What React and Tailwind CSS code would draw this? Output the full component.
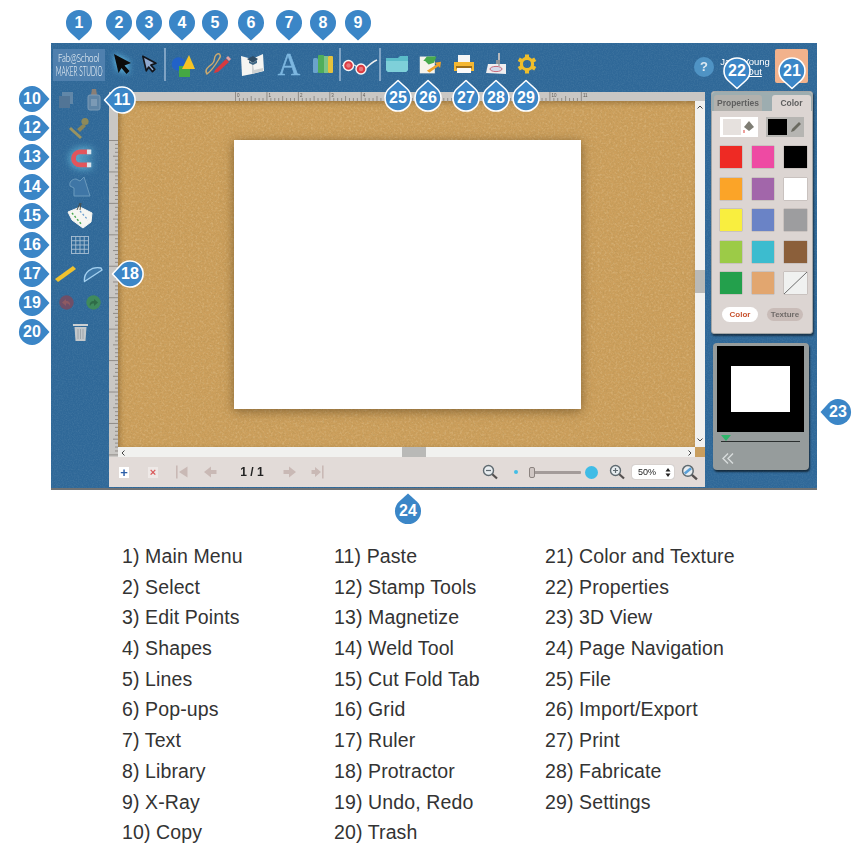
import React from "react";

function Pin({ n, dir = "down", ring = false, pos }) {
  const rot = { down: "", up: "rotate-180", left: "rotate-90", right: "-rotate-90" }[dir];
  return (
    <div className={`absolute w-9 h-9 ${pos}`}>
      <svg viewBox="0 0 36 36" width="36" height="36" className={`absolute inset-0 overflow-visible ${rot}`}>
        <path d="M18 35.5 L9.2 27.5 A13 13 0 1 1 26.8 27.5 Z" fill="#3b86c7" stroke={ring ? "#ffffff" : "none"} strokeWidth="1.6" strokeLinejoin="round" />
      </svg>
      <div className="absolute inset-0 flex items-center justify-center text-white font-bold text-[16px] leading-none">{n}</div>
    </div>
  );
}

const Slot = ({ w, children }) => <div className={`${w} flex items-center justify-center shrink-0 h-full`}>{children}</div>;
const Divider = () => <div className="w-[2px] h-[33px] shrink-0 bg-[#7fa3c4]" />;

const SelectIcon = () => (
  <svg width="26" height="26" viewBox="0 0 26 26" className="drop-shadow-[0_0_3px_#6fd0f5]">
    <path d="M5 3 L22 12 L15.5 14.5 L20.5 20 L17.5 23 L12.5 17 L9.5 22Z" fill="#0b0b0b" />
  </svg>
);
const EditIcon = () => (
  <svg width="22" height="22" viewBox="0 0 26 26">
    <path d="M5 3 L22 12 L15.5 14.5 L20.5 20 L17.5 23 L12.5 17 L9.5 22Z" fill="#8fa9cf" stroke="#12151c" strokeWidth="2.2" strokeLinejoin="round" />
  </svg>
);
const ShapesIcon = () => (
  <svg width="26" height="26" viewBox="0 0 26 26">
    <circle cx="9.5" cy="13" r="6.8" fill="#2262c8" />
    <path d="M10 26 V15 H21 V26Z" fill="#45a843" />
    <path d="M20 4 L26 18 H13Z" fill="#f6c324" />
  </svg>
);
const LinesIcon = () => (
  <svg width="28" height="26" viewBox="0 0 28 26">
    <path d="M4 23 C1 19 5 16 9 13 C13 10 10 7 13 4 C16 1 19 4 16 8 C13 13 8 20 4 23Z" fill="none" stroke="#cdaa6e" strokeWidth="1.4" />
    <path d="M12 19 L23 8 L26 11 L15 21 L11 22Z" fill="#d63a3f" />
    <path d="M23 7 L25 5 L28 8 L26 10Z" fill="#e8a0a0" />
  </svg>
);
const BookIcon = () => (
  <svg width="26" height="26" viewBox="0 0 26 26">
    <path d="M2 5 L13 8 L24 3 L25 20 L13 23 L3 25Z" fill="#f5f5f2" />
    <path d="M13 8 L13 23 L24 20 L24 17 L15 19Z" fill="#cfd2d2" />
    <path d="M8 8 L14 5 L19 8 L14 12Z" fill="#2e4d66" />
    <path d="M10 10 L14 12 L18 9 L18 12 L14 14 L10 12Z" fill="#3f6785" />
  </svg>
);
const LibraryIcon = () => (
  <svg width="22" height="20" viewBox="0 0 22 20">
    <rect x="1" y="4" width="5" height="15" rx="1.5" fill="#6aa3cc" />
    <rect x="6" y="1" width="6" height="18" rx="1" fill="#4fae5b" />
    <rect x="12" y="2" width="4" height="17" fill="#7dc487" />
    <rect x="16" y="2" width="5" height="17" rx="1" fill="#e5c23c" />
  </svg>
);
const GlassesIcon = () => (
  <svg width="36" height="22" viewBox="0 0 36 22">
    <path d="M0.5 13 L5 9 M23 16 C26 13 30 9 35 7" stroke="#eeeeee" strokeWidth="1.4" fill="none" />
    <path d="M10 12 C12 11 13 12 15 14" stroke="#eeeeee" strokeWidth="1.2" fill="none" />
    <circle cx="6.5" cy="12.5" r="5" fill="#dc3c42" stroke="#f8f8f8" strokeWidth="1.4" />
    <circle cx="19" cy="16" r="5" fill="#dc3c42" stroke="#f8f8f8" strokeWidth="1.4" />
    <circle cx="6.5" cy="12.5" r="2.2" fill="#e9787c" />
    <circle cx="19" cy="16" r="2.2" fill="#e9787c" />
  </svg>
);
const FolderIcon = () => (
  <svg width="24" height="20" viewBox="0 0 24 20">
    <path d="M1 4 H13 L15 2 H23 V16 L21 18 H3 L1 16Z" fill="#5bbcc9" />
    <path d="M1 7 H23 V16 L21 18 H3 L1 16Z" fill="#7ed0d9" />
  </svg>
);
const ImportIcon = () => (
  <svg width="23" height="23" viewBox="0 0 26 26">
    <path d="M2 4 H19 V23 H2Z" fill="#f5f3ec" />
    <path d="M6 9 L10 4 H21 L18 11 L12 13 L8 9Z" fill="#47a94d" />
    <path d="M10 20 L21 13 L19 11 L26 10 L25 17 L23 15 L13 22Z" fill="#eca12d" />
  </svg>
);
const PrintIcon = () => (
  <svg width="22" height="22" viewBox="0 0 22 22">
    <path d="M5 2 H17 V10 H5Z" fill="#f5f5f5" />
    <path d="M1 9 H21 V18 H1Z" fill="#f4b732" />
    <path d="M3 13 H19 V15.5 H3Z" fill="#9c6d18" />
    <path d="M4 15 H18 V20 H4Z" fill="#fafafa" />
  </svg>
);
const FabIcon = () => (
  <svg width="22" height="24" viewBox="0 0 22 24">
    <path d="M3 12 L21 12 L21 22 L1 21Z" fill="#f0eef0" />
    <ellipse cx="11" cy="17" rx="6" ry="2.6" fill="#d5d9ea" stroke="#c66d7f" strokeWidth="1" />
    <path d="M13 1 H15 V14 H13Z" fill="#b5b8bc" />
    <path d="M11 8 H15 V12 H11Z" fill="#8f9499" />
  </svg>
);
const GearIcon = () => (
  <svg width="20" height="20" viewBox="0 0 20 20">
    <circle cx="10" cy="10" r="5.6" fill="none" stroke="#f0be2b" strokeWidth="3.2" />
    {[0, 60, 120, 180, 240, 300].map((a) => (
      <rect key={a} x="8" y="0.5" width="4" height="4" fill="#f0be2b" transform={`rotate(${a} 10 10)`} />
    ))}
  </svg>
);

const Copy = () => (
  <svg width="16" height="18" viewBox="0 0 16 18">
    <rect x="4" y="1" width="11" height="12" fill="#6187a8" />
    <rect x="1" y="5" width="11" height="12" fill="#527596" />
  </svg>
);
const Paste = () => (
  <svg width="14" height="22" viewBox="0 0 14 22">
    <path d="M5 0 H9 L10 6 H4Z" fill="#8a7f76" />
    <rect x="1" y="6" width="12" height="15" rx="2" fill="#5f85a6" stroke="#7d9bb6" />
    <rect x="4" y="10" width="6" height="7" fill="#7c9ab5" />
  </svg>
);
const Stamp = () => (
  <svg width="24" height="24" viewBox="0 0 24 24">
    <circle cx="17" cy="4.5" r="3.6" fill="#8e8a5a" />
    <path d="M15 7 L18 9 L12 15 L9 12Z" fill="#8b8658" />
    <path d="M3 10 L14 20 L12 22 L1 12Z" fill="#9a9360" />
  </svg>
);
const Magnet = () => (
  <svg width="26" height="22" viewBox="0 0 30 24" className="drop-shadow-[0_0_4px_#7fe0f8]">
    <path d="M26 5 H15 A7.5 7.5 0 0 0 15 20 H26" fill="none" stroke="#e2555c" strokeWidth="5.5" />
    <path d="M23 2.2 H28 V7.8 H23Z M23 17.2 H28 V22.8 H23Z" fill="#d9e4ec" />
  </svg>
);
const Weld = () => (
  <svg width="22" height="22" viewBox="0 0 22 22">
    <path d="M7 3 C3 3 0 6 1 10 L5 12 V20 H21 L15 1 L11 5Z" fill="#3f76a6" stroke="#6b9abd" strokeWidth="1" />
  </svg>
);
const CutFold = () => (
  <svg width="27" height="26" viewBox="0 0 27 26">
    <path d="M1 9 L13 4 L25 10 L24 19 L16 25 L5 17Z" fill="#f6f6f2" strokeLinejoin="round" stroke="#f6f6f2" />
    <path d="M5 10 L15 22" stroke="#48a84e" strokeWidth="1.4" strokeDasharray="2 2" />
    <path d="M13 8 L21 17" stroke="#6d9fcf" strokeWidth="1.2" strokeDasharray="2 2" />
    <path d="M10 7 L13 0 M13 7 L14 0" stroke="#4a4a40" strokeWidth="0.9" />
  </svg>
);
const GridIcon = () => (
  <svg width="18" height="18" viewBox="0 0 18 18" stroke="#a9bfd3" strokeWidth="0.9" fill="none">
    <rect x="0.5" y="0.5" width="17" height="17" />
    <path d="M4.75 .5V17.5M9 .5V17.5M13.25 .5V17.5M.5 4.75H17.5M.5 9H17.5M.5 13.25H17.5" />
  </svg>
);
const Ruler = () => (
  <svg width="21" height="17" viewBox="0 0 21 17"><path d="M0 14 L18 1 L21 4 L3 17Z" fill="#f0c22e" /></svg>
);
const Protractor = () => (
  <svg width="20" height="18" viewBox="0 0 20 18">
    <path d="M1.5 16.5 C0.5 8 8 1 18 3 L19 5Z" fill="#3f79a9" stroke="#a3d0f0" strokeWidth="1.4" strokeLinejoin="round" />
  </svg>
);
const Undo = ({ c, d, a }) => (
  <svg width="15" height="15" viewBox="0 0 15 15">
    <circle cx="7.5" cy="7.5" r="7.2" fill={c} />
    <path d={d} fill={a} />
  </svg>
);
const Trash = () => (
  <svg width="15" height="19" viewBox="0 0 15 19">
    <path d="M0 2 H15 V4 H0Z" fill="#ccd0d2" />
    <path d="M1.5 5 H13.5 L12.5 19 H2.5Z" fill="#c3c8cb" />
    <path d="M5 7 V17 M7.5 7 V17 M10 7 V17" stroke="#9aa2a8" strokeWidth="0.9" />
  </svg>
);

const Row = ({ children, between }) => (
  <div className={`h-[29px] flex items-center ${between ? "justify-between px-[6px]" : "justify-center"}`}>{children}</div>
);

const majors = [0, 1, 2, 3, 4, 10, 11];
const ticks = Array.from({ length: 89 }, (_, i) => i);

const TopRuler = () => (
  <svg width="356" height="9" viewBox="0 0 356 9" className="block">
    {ticks.map((i) => {
      const x = 0.5 + i * 3.93;
      const h = i % 8 === 0 ? 9 : i % 4 === 0 ? 5 : 3;
      return <line key={i} x1={x} x2={x} y1={9} y2={9 - h} stroke="#77736e" strokeWidth="0.7" />;
    })}
    {majors.map((i) => (
      <text key={i} x={2 + i * 31.45} y="4.5" fontSize="4.5" fill="#5e5a56" fontFamily="Liberation Sans">{i}</text>
    ))}
  </svg>
);
const LeftRuler = () => (
  <svg width="9" height="317" viewBox="0 0 9 317" className="block">
    {Array.from({ length: 81 }, (_, i) => i).map((i) => {
      const y = 0.5 + i * 3.93;
      const h = i % 8 === 0 ? 9 : i % 4 === 0 ? 5 : 3;
      return <line key={i} x1={9} x2={9 - h} y1={y} y2={y} stroke="#77736e" strokeWidth="0.7" />;
    })}
  </svg>
);

const swatches = [
  "bg-[#ee2a24]", "bg-[#ee4aa3]", "bg-black",
  "bg-[#fba428]", "bg-[#a266aa]", "bg-white",
  "bg-[#f9ee3f]", "bg-[#6a83c6]", "bg-[#9d9d9f]",
  "bg-[#9ccb47]", "bg-[#3cbccf]", "bg-[#8b5f3a]",
  "bg-[#23a04c]", "bg-[#e2a66f]",
];

const Arrow = ({ d, bar }) => (
  <svg width="14" height="14" viewBox="0 0 14 14">
    <path d={d} fill="#c9b9b5" />
    {bar && <path d={bar} fill="#c9b9b5" />}
  </svg>
);

const Mag = ({ inner, size = 16 }) => (
  <svg width={size} height={size} viewBox="0 0 16 16">
    <path d="M9.5 9.5 L15 14.5" stroke="#55504f" strokeWidth="2.2" />
    <circle cx="6.5" cy="6.5" r="5" fill="#e8edf0" stroke="#5f6a70" strokeWidth="1.4" />
    {inner}
  </svg>
);

const col1 = ["1) Main Menu", "2) Select", "3) Edit Points", "4) Shapes", "5) Lines", "6) Pop-ups", "7) Text", "8) Library", "9) X-Ray", "10) Copy"];
const col2 = ["11) Paste", "12) Stamp Tools", "13) Magnetize", "14) Weld Tool", "15) Cut Fold Tab", "16) Grid", "17) Ruler", "18) Protractor", "19) Undo, Redo", "20) Trash"];
const col3 = ["21) Color and Texture", "22) Properties", "23) 3D View", "24) Page Navigation", "25) File", "26) Import/Export", "27) Print", "28) Fabricate", "29) Settings"];

const Column = ({ items, w }) => (
  <div className={`${w} shrink-0`}>
    {items.map((t) => (
      <div key={t} className="h-[30.7px] leading-[30.7px] whitespace-nowrap">{t}</div>
    ))}
  </div>
);

export default function App() {
  return (
    <div className="relative w-[866px] h-[856px] overflow-hidden bg-white font-['Liberation_Sans',Arial,sans-serif]">
      <div className="pt-[43px] pl-[51px]">
        <div className="relative w-[766px] h-[447px] bg-[#2f6898] border-b-2 border-[#6f7274] blur-[0.35px]">
          <svg className="absolute inset-0" width="766" height="445">
            <filter id="denim" x="0" y="0" width="100%" height="100%">
              <feTurbulence type="fractalNoise" baseFrequency="0.8" numOctaves="2" seed="3" />
              <feColorMatrix values="0 0 0 0 0.1  0 0 0 0 0.25  0 0 0 0 0.42  1.5 0 0 0 -0.55" />
            </filter>
            <rect width="766" height="445" filter="url(#denim)" opacity="0.45" />
          </svg>
          <div className="relative">
            <div className="h-[42px] flex items-center">
              <div className="ml-[2px] w-[52px] h-[32px] mt-[2px] bg-[#4f80ae] text-white flex flex-col items-center justify-center shrink-0 font-light leading-none whitespace-nowrap overflow-hidden">
                <div className="text-[11px] scale-x-[0.72] font-['Lato',sans-serif]">Fab@School</div>
                <div className="text-[14px] scale-x-[0.46] mt-[1px] font-['Lato',sans-serif]">MAKER STUDIO</div>
              </div>
              <Slot w="w-[34px]"><SelectIcon /></Slot>
              <Slot w="w-[20px]"><EditIcon /></Slot>
              <div className="w-[5px] shrink-0" />
              <Divider />
              <Slot w="w-[31px]"><ShapesIcon /></Slot>
              <Slot w="w-[40px]"><LinesIcon /></Slot>
              <Slot w="w-[30px]"><BookIcon /></Slot>
              <Slot w="w-[42px]"><span className="font-['Liberation_Serif',serif] text-[#7db7e0] text-[31px] leading-none ml-[2px] [-webkit-text-stroke:0.5px_#7db7e0]">A</span></Slot>
              <Slot w="w-[28px]"><LibraryIcon /></Slot>
              <div className="w-[2px] shrink-0" />
              <Divider />
              <Slot w="w-[38px]"><GlassesIcon /></Slot>
              <Divider />
              <Slot w="w-[32px]"><FolderIcon /></Slot>
              <Slot w="w-[32px]"><ImportIcon /></Slot>
              <Slot w="w-[38px]"><PrintIcon /></Slot>
              <Slot w="w-[26px]"><FabIcon /></Slot>
              <Slot w="w-[36px]"><GearIcon /></Slot>
              <div className="flex-1" />
              <div className="w-5 h-5 rounded-full bg-[#4f93c4] text-[#dfeaf2] text-[13px] font-bold flex items-center justify-center mt-[5px] shrink-0">?</div>
              <div className="w-[50px] ml-[6px] mt-[5px] text-white text-[9.5px] leading-[10px] text-center whitespace-nowrap shrink-0">
                <div>Jane Young</div>
                <div className="underline">Log Out</div>
              </div>
              <div className="w-[33px] h-[34px] ml-[5px] mr-[9px] mt-[4px] rounded-[2px] bg-[#f2b28c] shrink-0" />
            </div>

            <div className="flex">
              <div className="w-[58px] shrink-0">
                <Row between><span className="ml-[1px]"><Copy /></span><span className="mr-[2px]"><Paste /></span></Row>
                <Row><Stamp /></Row>
                <Row><Magnet /></Row>
                <Row><Weld /></Row>
                <Row><CutFold /></Row>
                <Row><GridIcon /></Row>
                <Row between><span className="-ml-[2px]"><Ruler /></span><span className="mr-0"><Protractor /></span></Row>
                <Row between>
                  <span className="ml-[2px]"><Undo c="#6e4f68" a="#8e5a62" d="M3 7.5 L7 4 V6 C10 6 12 8 11 11 C10 9 9 8.5 7 8.5 V11Z" /></span>
                  <span className="mr-[2px]"><Undo c="#3f8a5c" a="#2f6b47" d="M12 7.5 L8 4 V6 C5 6 3 8 4 11 C5 9 6 8.5 8 8.5 V11Z" /></span>
                </Row>
                <Row><Trash /></Row>
              </div>

              <div className="w-[596px] shrink-0 mt-[7px] h-[395px] flex flex-col bg-[#e2dbd8]">
                <div className="h-[9px] bg-[#c9c7c4] pl-[126px]"><TopRuler /></div>
                <div className="flex h-[356px]">
                  <div className="w-[9px] h-full bg-[#c9c7c4] pt-[39px] overflow-hidden shrink-0"><LeftRuler /></div>
                  <div className="w-[587px] flex flex-col">
                    <div className="flex h-[346px]">
                      <div className="relative w-[577px] h-full pl-[116px] pt-[39px] bg-[#cc9f5c] overflow-hidden">
                        <svg className="absolute inset-0" width="577" height="346">
                          <filter id="corkDark" x="0" y="0" width="100%" height="100%">
                            <feTurbulence type="fractalNoise" baseFrequency="0.6" numOctaves="3" seed="7" />
                            <feColorMatrix values="0 0 0 0 0.42  0 0 0 0 0.27  0 0 0 0 0.08  1.8 0 0 0 -0.78" />
                          </filter>
                          <filter id="corkLight" x="0" y="0" width="100%" height="100%">
                            <feTurbulence type="fractalNoise" baseFrequency="0.45" numOctaves="2" seed="21" />
                            <feColorMatrix values="0 0 0 0 0.93  0 0 0 0 0.8  0 0 0 0 0.55  2 0 0 0 -0.95" />
                          </filter>
                          <rect width="577" height="346" filter="url(#corkDark)" opacity="0.5" />
                          <rect width="577" height="346" filter="url(#corkLight)" opacity="0.3" />
                        </svg>
                        <div className="absolute inset-0 shadow-[inset_2px_2px_5px_rgba(70,45,10,0.35)]" />
                        <div className="relative w-[347px] h-[269px] bg-white shadow-[0_2px_10px_rgba(60,40,10,0.5)]" />
                      </div>
                      <div className="relative w-[10px] h-full bg-[#f1f1ef]">
                        <div className="mt-[169px] h-[23px] bg-[#b9b9b7]" />
                        <svg className="absolute top-[4px] left-[2px]" width="6" height="4" viewBox="0 0 6 4"><path d="M.5 3.5 L3 1 L5.5 3.5" fill="none" stroke="#444" strokeWidth="1" /></svg>
                        <svg className="absolute bottom-[5px] left-[2px]" width="6" height="4" viewBox="0 0 6 4"><path d="M.5 .5 L3 3 L5.5 .5" fill="none" stroke="#444" strokeWidth="1" /></svg>
                      </div>
                    </div>
                    <div className="flex h-[10px]">
                      <div className="relative w-[577px] h-full bg-[#f1f1ef]">
                        <div className="ml-[284px] w-[24px] h-full bg-[#b9b9b7]" />
                        <svg className="absolute top-[3px] left-[3px]" width="4" height="6" viewBox="0 0 4 6"><path d="M3.5 .5 L1 3 L3.5 5.5" fill="none" stroke="#444" strokeWidth="1" /></svg>
                        <svg className="absolute top-[3px] right-[3px]" width="4" height="6" viewBox="0 0 4 6"><path d="M.5 .5 L3 3 L.5 5.5" fill="none" stroke="#444" strokeWidth="1" /></svg>
                      </div>
                      <div className="w-[10px] h-full bg-[#c99e5e]" />
                    </div>
                  </div>
                </div>

                <div className="h-[30px] flex items-center text-[#222]">
                  <div className="ml-[10px] w-[10px] h-[11px] bg-white flex items-center justify-center text-[#2c5fa8] font-bold text-[13px] leading-none">+</div>
                  <div className="ml-[19px] w-[10px] h-[11px] bg-[#eee9e7] flex items-center justify-center text-[#d9595a] font-bold text-[11px] leading-none">×</div>
                  <div className="ml-[17px]"><Arrow d="M4 7 L12.5 1.5 V12.5Z" bar="M1 0.5 H2.6 V13.5 H1Z" /></div>
                  <div className="ml-[14px]"><Arrow d="M1 7 L8 1.5 V5 H13.5 V9 H8 V12.5Z" /></div>
                  <div className="ml-[20px] w-[30px] text-center text-[12px] font-bold leading-none whitespace-nowrap">1 / 1</div>
                  <div className="ml-[16px]"><Arrow d="M13 7 L6 1.5 V5 H.5 V9 H6 V12.5Z" /></div>
                  <div className="ml-[14px]"><Arrow d="M10 7 L4 2 V5 H.5 V9 H4 V12Z" bar="M11 0.5 H12.6 V13.5 H11Z" /></div>
                  <div className="ml-[157px]"><Mag inner={<path d="M4 6.5 H9" stroke="#5f6a70" strokeWidth="1.2" />} /></div>
                  <div className="ml-[16px] w-[4px] h-[4px] rounded-full bg-[#43bde6]" />
                  <div className="relative ml-[11px] w-[52px] h-[3px] bg-[#a39b99] rounded-[1px]">
                    <div className="absolute left-0 top-[-4px] w-[6px] h-[11px] rounded-[2px] bg-[#cfc6c3] border border-[#8b8380]" />
                  </div>
                  <div className="ml-[4px] w-[13px] h-[13px] rounded-full bg-[#3fbce6]" />
                  <div className="ml-[11px]"><Mag inner={<path d="M4 6.5 H9 M6.5 4 V9" stroke="#5f6a70" strokeWidth="1.2" />} /></div>
                  <div className="ml-[7px] w-[42px] h-[14px] bg-white rounded-[3px] shadow-[0_0_1px_#888] flex items-center justify-between pl-[6px] pr-[3px] text-[9px] leading-none">
                    <span>50%</span>
                    <svg width="6" height="9" viewBox="0 0 6 9"><path d="M3 0 L5.5 3.4 H.5Z M3 9 L.5 5.6 H5.5Z" fill="#222" /></svg>
                  </div>
                  <div className="ml-[7px]"><Mag size={17} inner={<path d="M3.5 9 L9.5 4" stroke="#5aa0d8" strokeWidth="2.4" />} /></div>
                </div>
              </div>

              <div className="w-[112px] shrink-0">
                <div className="ml-[6px] mt-[6px] w-[102px] h-[243px] rounded-[3px] bg-[#dcd5d2] border border-[#a3a6a6] shadow-[1px_2px_2px_rgba(0,0,0,0.5)] flex flex-col">
                  <div className="flex h-[19px] bg-[#9dadb0] rounded-t-[3px] pl-[2px] pt-[3px] text-[8.5px] font-bold leading-[16px]">
                    <div className="w-[48px] text-center bg-[#b2b1ad] rounded-t-[3px] text-[#5f5f5f]">Properties</div>
                    <div className="ml-[10px] w-[39px] text-center bg-[#dcd5d2] rounded-t-[3px] text-[#5f5f5f]">Color</div>
                  </div>
                  <div className="flex pl-[8px] pr-[8px] mt-[6px] justify-between">
                    <div className="w-[38px] h-[20px] bg-white flex items-center pl-[3px]">
                      <div className="w-[18px] h-[16px] bg-[#e6e1de]" />
                      <svg className="ml-[2px]" width="12" height="14" viewBox="0 0 12 14"><path d="M6 1 L11 7 L6 11 L1 7Z" fill="#7e7d74" /><path d="M1 10 V13" stroke="#e2605a" strokeWidth="1.2" /></svg>
                    </div>
                    <div className="w-[38px] h-[20px] bg-[#b6b5b2] flex items-center pl-[2px]">
                      <div className="w-[19px] h-[16px] bg-black" />
                      <svg className="ml-[3px]" width="12" height="12" viewBox="0 0 12 12"><path d="M1 11 L2 8 L9 1 L11 3 L4 10Z" fill="#6a6a60" /></svg>
                    </div>
                  </div>
                  <div className="grid grid-cols-[22px_22px_23px] gap-x-[10px] gap-y-[9.5px] pl-[7px] ml-[1px] mt-[9px]">
                    {swatches.map((c, i) => (
                      <div key={i} className={`h-[22px] ${c} shadow-[0_0_1px_rgba(0,0,0,0.5)]`} />
                    ))}
                    <svg width="23" height="22" viewBox="0 0 23 22" className="bg-[#f0f1f0] shadow-[0_0_1px_rgba(0,0,0,0.5)]">
                      <line x1="0" y1="22" x2="23" y2="0" stroke="#6c6c6c" strokeWidth="1" />
                    </svg>
                  </div>
                  <div className="flex items-center justify-between pl-[10px] pr-[9px] mt-[13px] text-[8px] font-bold leading-none">
                    <div className="w-[36px] h-[15px] rounded-full bg-white text-[#c8532f] flex items-center justify-center">Color</div>
                    <div className="w-[36px] h-[13px] rounded-full bg-[#c9bcb8] text-[#6f6a68] flex items-center justify-center">Texture</div>
                  </div>
                </div>

                <div className="ml-[8px] mt-[9px] w-[96px] h-[127px] rounded-[4px] bg-[#969c9c] shadow-[1px_2px_2px_rgba(0,0,0,0.6)] pt-[3px]">
                  <div className="ml-[4px] w-[87px] h-[86px] bg-black pl-[14px] pt-[20px]">
                    <div className="w-[59px] h-[46px] bg-white" />
                  </div>
                  <div className="relative ml-[8px] mt-[9px] w-[79px] h-[1px] bg-[#2b2f2f]">
                    <svg className="absolute left-0 top-[-6px]" width="10" height="6" viewBox="0 0 10 6"><path d="M0 0 H10 L5 6Z" fill="#2fb56b" /></svg>
                  </div>
                  <svg className="ml-[9px] mt-[11px]" width="12" height="11" viewBox="0 0 12 11" fill="none" stroke="#d8dcdc" strokeWidth="1.4"><path d="M6 .5 L1 5.5 L6 10.5 M11 .5 L6 5.5 L11 10.5" /></svg>
                </div>
              </div>
            </div>
          </div>
        </div>
      </div>

      <div className="flex pl-[122px] pt-[51px] text-[19.5px] text-[#333] tracking-[0.12px]">
        <Column items={col1} w="w-[212px]" />
        <Column items={col2} w="w-[211px]" />
        <Column items={col3} w="w-[240px]" />
      </div>

      <Pin n="1" pos="left-[61px] top-[5px]" />
      <Pin n="2" pos="left-[101px] top-[5px]" />
      <Pin n="3" pos="left-[131px] top-[5px]" />
      <Pin n="4" pos="left-[164px] top-[5px]" />
      <Pin n="5" pos="left-[197px] top-[5px]" />
      <Pin n="6" pos="left-[233px] top-[5px]" />
      <Pin n="7" pos="left-[271px] top-[5px]" />
      <Pin n="8" pos="left-[305px] top-[5px]" />
      <Pin n="9" pos="left-[340px] top-[5px]" />
      <Pin n="25" dir="up" ring pos="left-[380px] top-[80px]" />
      <Pin n="26" dir="up" ring pos="left-[410px] top-[80px]" />
      <Pin n="27" dir="up" ring pos="left-[448px] top-[80px]" />
      <Pin n="28" dir="up" ring pos="left-[478px] top-[80px]" />
      <Pin n="29" dir="up" ring pos="left-[508px] top-[80px]" />
      <Pin n="22" ring pos="left-[719px] top-[53px]" />
      <Pin n="21" ring pos="left-[774px] top-[53px]" />
      <Pin n="11" dir="left" ring pos="left-[104px] top-[82px]" />
      <Pin n="18" dir="left" ring pos="left-[112px] top-[256px]" />
      <Pin n="10" dir="right" pos="left-[14px] top-[81px]" />
      <Pin n="12" dir="right" pos="left-[14px] top-[110px]" />
      <Pin n="13" dir="right" pos="left-[14px] top-[139px]" />
      <Pin n="14" dir="right" pos="left-[14px] top-[169px]" />
      <Pin n="15" dir="right" pos="left-[14px] top-[198px]" />
      <Pin n="16" dir="right" pos="left-[14px] top-[227px]" />
      <Pin n="17" dir="right" pos="left-[14px] top-[256px]" />
      <Pin n="19" dir="right" pos="left-[14px] top-[285px]" />
      <Pin n="20" dir="right" pos="left-[14px] top-[314px]" />
      <Pin n="23" dir="left" pos="left-[820px] top-[394px]" />
      <Pin n="24" dir="up" pos="left-[390px] top-[493px]" />
    </div>
  );
}
